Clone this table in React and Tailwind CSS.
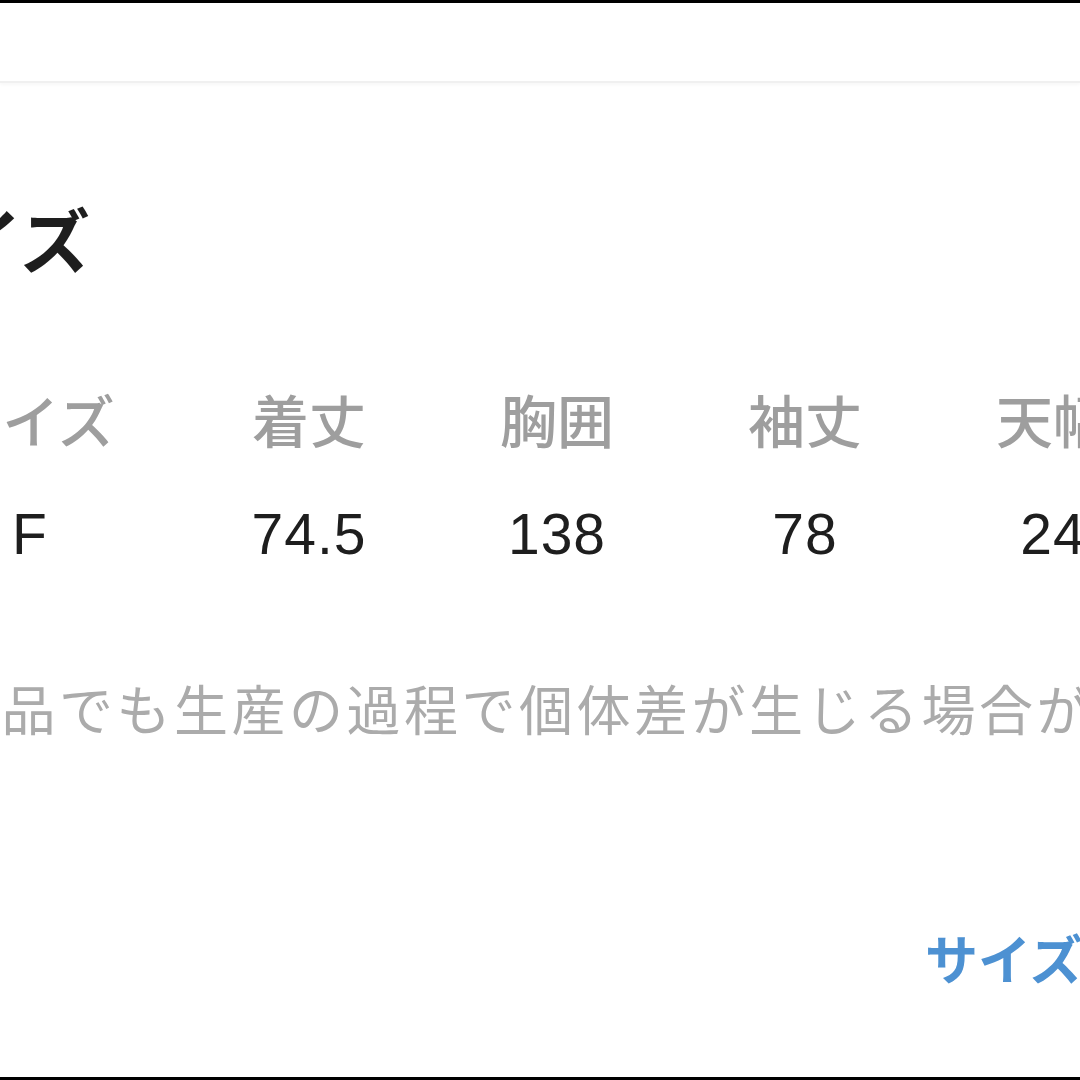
const jp = '[font-family:"Noto_Sans_CJK_JP","Noto_Sans",sans-serif]';

const columns = [
  { label: 'サイズ', value: 'F' },
  { label: '着丈', value: '74.5' },
  { label: '胸囲', value: '138' },
  { label: '袖丈', value: '78' },
  { label: '天幅', value: '24' },
];

export default function App() {
  return (
    <div className="w-[1080px] h-[1080px] overflow-hidden bg-white border-y-[3px] border-black flex flex-col">
      {/* top nav strip */}
      <div className="h-[80px] shrink-0 border-b-2 border-[#f0f0f0] shadow-[0_2px_3px_rgba(0,0,0,0.03)]" />

      <div className={`flex flex-col ${jp}`}>
        <h2 className="mt-[120px] -ml-[118px] text-[70px] leading-none font-bold text-[#1e1e1e] whitespace-nowrap">
          サイズ
        </h2>

        {/* size table */}
        <div className="mt-[117px] -ml-[94px] flex whitespace-nowrap">
          {columns.map((c, i) => (
            <div key={c.label} className={`w-[248px] shrink-0 flex flex-col items-center ${i === 1 ? 'ml-[31px]' : ''}`}>
              <span className="text-[57px] leading-none font-medium text-[#9e9e9e]">{c.label}</span>
              <span className='mt-[59px] text-[57px] leading-none tracking-[1px] text-[#1e1e1e] [font-family:"Liberation_Sans",Arial,sans-serif]'>
                {c.value}
              </span>
            </div>
          ))}
        </div>

        <p className="mt-[118px] -ml-[171px] text-[54px] leading-none tracking-[3.5px] font-normal text-[#ababab] whitespace-nowrap">
          同じ商品でも生産の過程で個体差が生じる場合があります。
        </p>

        <div className="mt-[196px] pl-[925px] whitespace-nowrap">
          <span className="text-[53px] leading-none font-bold text-[#4d91d2]">サイズガイド</span>
        </div>
      </div>
    </div>
  );
}
